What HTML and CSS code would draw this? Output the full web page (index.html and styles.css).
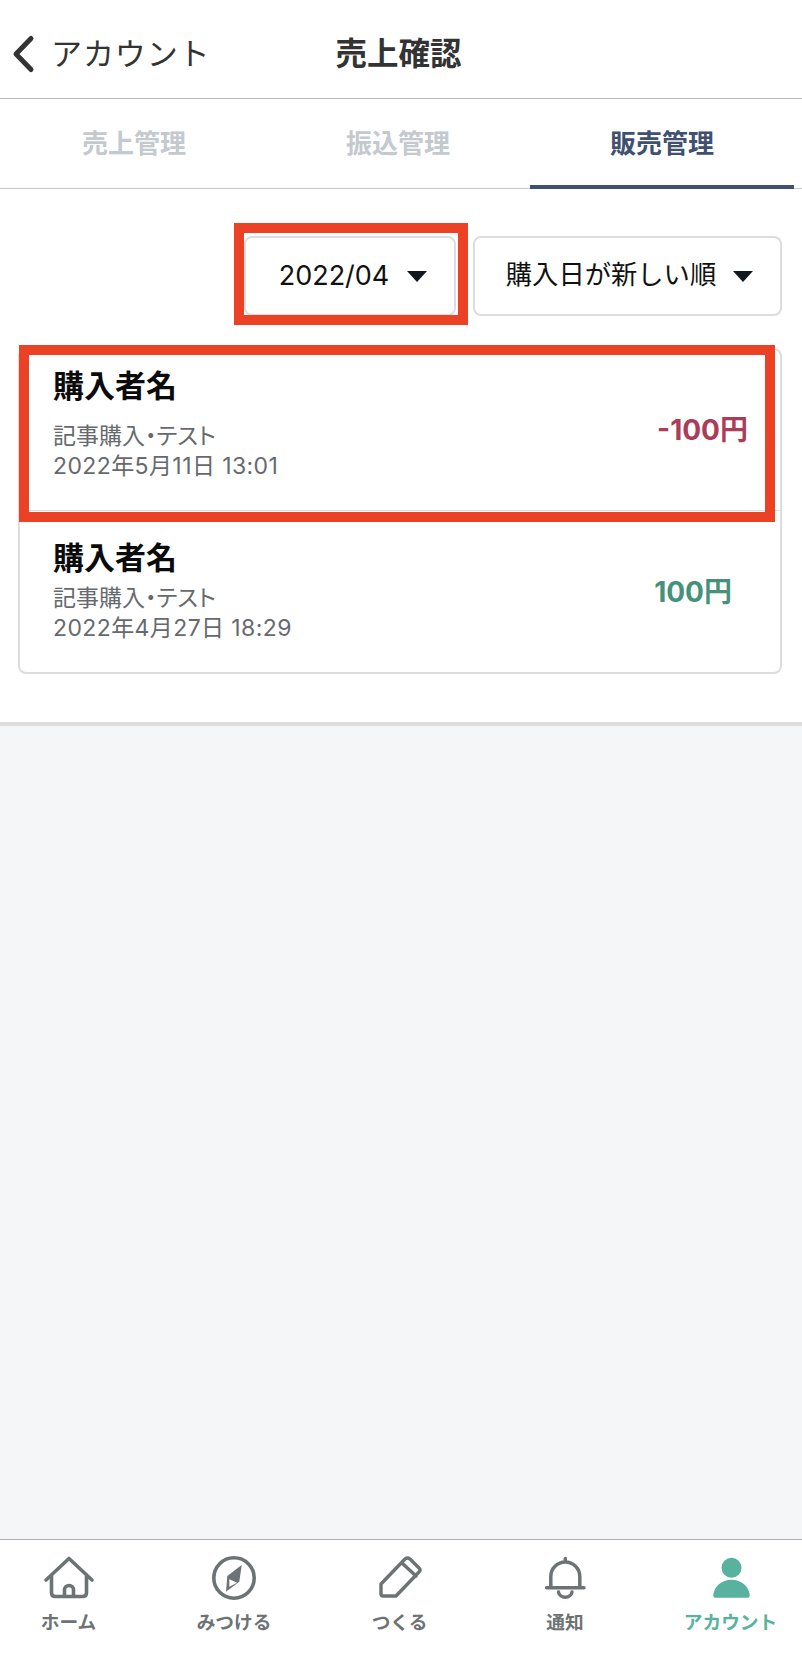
FILE: index.html
```html
<!DOCTYPE html>
<html lang="ja">
<head>
<meta charset="utf-8">
<title>売上確認</title>
<link rel="stylesheet" href="styles.css">
</head>
<body>
<div class="app">
  <header class="topbar">
    <a class="back">
      <svg class="back-icon" viewBox="0 0 24 40" width="24" height="40"><path d="M19 4.500 L4 20 L19 35.500" fill="none" stroke="#333" stroke-width="5" stroke-linecap="round" stroke-linejoin="round"/></svg>
      <span class="back-label">アカウント</span>
    </a>
    <h1 class="title">売上確認</h1>
  </header>
  <nav class="tabs">
    <div class="tab">売上管理</div>
    <div class="tab">振込管理</div>
    <div class="tab tab-active">販売管理</div>
  </nav>
  <main class="content">
    <div class="filters">
      <div class="select select-month">
        <span>2022/04</span><i class="caret"></i>
        <div class="mark mark-month"></div>
      </div>
      <div class="select select-sort">
        <span>購入日が新しい順</span><i class="caret"></i>
      </div>
    </div>
    <div class="list">
      <div class="row row-first">
        <div class="row-main">
          <div class="buyer">購入者名</div>
          <div class="meta">記事購入・テスト</div>
          <div class="meta meta-date">2022年5月11日 13:01</div>
        </div>
        <div class="price price-minus">-100円</div>
        <div class="mark mark-row"></div>
      </div>
      <div class="row row-second">
        <div class="row-main">
          <div class="buyer">購入者名</div>
          <div class="meta">記事購入・テスト</div>
          <div class="meta meta-date">2022年4月27日 18:29</div>
        </div>
        <div class="price price-plus">100円</div>
      </div>
    </div>
  </main>
  <div class="blank"></div>
  <footer class="bottom">
    <div class="nav-item">
      <svg viewBox="0 0 52 46" width="52" height="46"><path d="M3 25 L26 3.500 L49 25 M8.500 21 V38 Q8.500 41.500 12.500 41.500 H39.500 Q43.500 41.500 43.500 38 V21 M21.500 41.500 V35 A4.500 4.500 0 0 1 30.500 35 V41.500" fill="none" stroke="#6d7374" stroke-width="3.600" stroke-linecap="round" stroke-linejoin="round"/></svg>
      <span>ホーム</span>
    </div>
    <div class="nav-item">
      <svg viewBox="0 0 46 46" width="46" height="46"><circle cx="23" cy="23" r="20.200" fill="none" stroke="#6d7374" stroke-width="3.600"/><path d="M30.700 10 L28.300 26.700 L15 36.700 L16.300 21 Z" fill="#6d7374"/><path d="M18.300 24.300 L18.300 31.700 L26.300 27.700 Z" fill="#fff"/></svg>
      <span>みつける</span>
    </div>
    <div class="nav-item">
      <svg viewBox="0 0 46 46" width="46" height="46"><path d="M4 29 L28 4 Q30.500 2 33 4 L42 13 Q44 15 42 17 L19 41 H6 Q4 41 4 39 Z M24.700 7.700 L39 21" fill="none" stroke="#6d7374" stroke-width="3.400" stroke-linecap="round" stroke-linejoin="round"/></svg>
      <span>つくる</span>
    </div>
    <div class="nav-item">
      <svg viewBox="0 0 46 46" width="46" height="46"><path d="M8.800 32.700 V21.500 A14.500 14.500 0 0 1 37.800 21.500 V32.700 M4.500 32.700 H42 M23.300 7 V3.500" fill="none" stroke="#6d7374" stroke-width="3.500" stroke-linecap="round" stroke-linejoin="round"/><path d="M16.500 37 A6.800 6 0 0 0 30 37" fill="none" stroke="#6d7374" stroke-width="3.400" stroke-linecap="round"/></svg>
      <span>通知</span>
    </div>
    <div class="nav-item nav-active">
      <svg viewBox="0 0 46 46" width="46" height="46"><circle cx="23.500" cy="12.700" r="10" fill="#58b29e"/><path d="M5.300 40.700 A18 15.700 0 0 1 41.700 40.700 Q41.700 42.700 40 42.700 H7 Q5.300 42.700 5.300 40.700 Z" fill="#58b29e"/></svg>
      <span>アカウント</span>
    </div>
  </footer>
</div>
</body>
</html>
```
FILE: styles.css
```css
* { box-sizing: border-box; }
html, body { margin: 0; padding: 0; }
body {
  background: #fff;
  font-family: "Inter", "Noto Sans CJK JP", sans-serif;
  color: #111;
}
.app {
  width: 802px;
  height: 1659px;
  display: flex;
  flex-direction: column;
  overflow: hidden;
}
.topbar {
  height: 99px;
  border-bottom: 1px solid #b9b9b9;
  display: flex;
  align-items: center;
  padding-left: 12px;
  padding-top: 10px;
}
.back { display: flex; align-items: center; gap: 15px; }
.back-icon { display: block; }
.back-label { font-size: 31px; line-height: 40px; color: #333; letter-spacing: 0.900px; }
.title {
  margin: 0 0 0 125px;
  font-size: 31.500px;
  line-height: 40px;
  font-weight: 700;
  color: #333;
}
.tabs {
  height: 90px;
  border-bottom: 1px solid #c4c7cb;
  display: flex;
  padding: 0 8px 0 2px;
}
.tab {
  flex: 1;
  text-align: center;
  font-size: 26px;
  line-height: 36px;
  font-weight: 700;
  color: #c3c9cf;
  padding-top: 27px;
  height: 90px;
}
.tab-active {
  color: #3f5070;
  border-bottom: 4px solid #3f5070;
}
.content {
  padding: 47px 20px 48px 18px;
  border-bottom: 4px solid #dcdcdd;
}
.filters {
  display: flex;
  justify-content: flex-end;
  gap: 17px;
  height: 80px;
}
.select {
  position: relative;
  height: 80px;
  border: 2px solid #dddddd;
  border-radius: 8px;
  display: flex;
  align-items: center;
  justify-content: center;
  color: #111;
}
.select-month { width: 212px; gap: 18px; padding-left: 6px; padding-bottom: 2px; font-size: 27px; }
.select-sort { width: 309px; gap: 17px; padding-bottom: 8px; padding-left: 4px; font-size: 26.300px; }
.caret {
  width: 0;
  height: 0;
  border-left: 10px solid transparent;
  border-right: 10px solid transparent;
  border-top: 11px solid #10181f;
}
.select-month .caret { margin-top: 2px; }
.select-sort .caret { margin-top: 8px; }
.list {
  margin-top: 32px;
  border: 2px solid #dddddd;
  border-radius: 8px;
  height: 326px;
}
.row {
  position: relative;
  display: flex;
  justify-content: space-between;
  padding-left: 33px;
}
.row-first {
  height: 161px;
  border-bottom: 1px solid #dddddd;
  padding-right: 32px;
}
.row-second {
  height: 161px;
  padding-right: 48px;
}
.buyer {
  font-size: 31px;
  line-height: 40px;
  font-weight: 700;
  color: #0b0b0b;
}
.row-first .buyer { margin-top: 16px; margin-bottom: 15px; }
.row-second .buyer { margin-top: 27px; margin-bottom: 5px; }
.meta {
  font-size: 23px;
  line-height: 30px;
  color: #666a6e;
  font-feature-settings: "palt";
}
.meta-date { letter-spacing: 0.400px; }
.price {
  font-size: 28px;
  line-height: 36px;
  font-weight: 700;
  font-feature-settings: "palt";
}
.price-minus { color: #ab3d58; margin-top: 62px; }
.price-plus { color: #45917a; margin-top: 63px; }
.mark {
  position: absolute;
  border: 10px solid #eb4226;
  pointer-events: none;
}
.mark-month { left: -12px; top: -15px; width: 234px; height: 102px; }
.mark-row { left: -1px; top: -5px; width: 756px; height: 177px; }
.blank { flex: 1; background: #f5f6f8; }
.bottom {
  height: 120px;
  border-top: 1px solid #b0b2b4;
  display: flex;
  justify-content: center;
  padding-right: 3px;
}
.nav-item {
  flex: none;
  width: 165.500px;
  display: flex;
  flex-direction: column;
  align-items: center;
  padding-top: 15px;
  font-size: 18.700px;
  line-height: 24px;
  font-weight: 700;
  color: #6d7374;
}
.nav-item svg { display: block; margin-bottom: 10px; }
.nav-active { color: #58b29e; }
```
